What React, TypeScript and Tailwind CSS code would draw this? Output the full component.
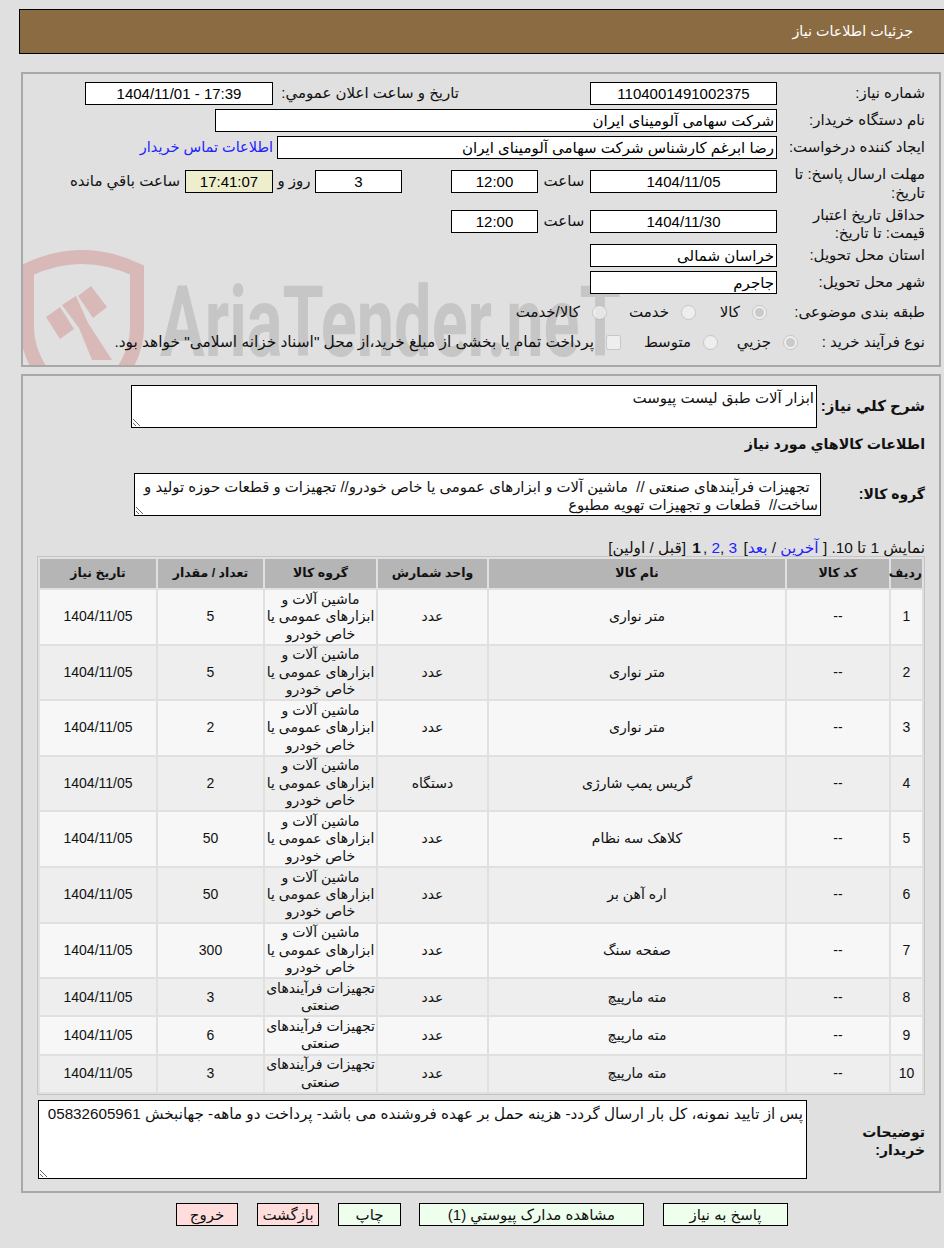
import type { ReactNode } from 'react';

const inputClass = 'h-[23px] border border-black px-[2px] text-[15px] leading-[21px] text-black outline-none';

function Field({ value, width, center = true, bg = 'bg-white' }: { value: string; width: string; center?: boolean; bg?: string }) {
  return (
    <div className={`${inputClass} ${width} ${bg} shrink-0 overflow-hidden whitespace-nowrap ${center ? 'text-center' : 'text-right'}`}>
      {value}
    </div>
  );
}

function Row({ label, className = '', children }: { label: ReactNode; className?: string; children: ReactNode }) {
  return (
    <div className={`flex items-center ${className}`}>
      <div className="w-[148px] shrink-0 pl-[2px] text-right">{label}</div>
      {children}
    </div>
  );
}

function Choice({ label, width, checked = false, box = false }: { label: ReactNode; width: string; checked?: boolean; box?: boolean }) {
  return (
    <label className={`flex items-center gap-[12px] ${width} shrink-0`}>
      <input
        type={box ? 'checkbox' : 'radio'}
        disabled
        defaultChecked={checked}
        className="m-0 h-[15px] w-[15px] shrink-0"
      />
      <span className="whitespace-nowrap">{label}</span>
    </label>
  );
}

const toolGroup = 'ماشین آلات و ابزارهای عمومی یا خاص خودرو';
const equipGroup = 'تجهیزات فرآیندهای صنعتی';

const items = [
  { id: 1, name: 'متر نواری', unit: 'عدد', group: toolGroup, qty: 5 },
  { id: 2, name: 'متر نواری', unit: 'عدد', group: toolGroup, qty: 5 },
  { id: 3, name: 'متر نواری', unit: 'عدد', group: toolGroup, qty: 2 },
  { id: 4, name: 'گریس پمپ شارژی', unit: 'دستگاه', group: toolGroup, qty: 2 },
  { id: 5, name: 'کلاهک سه نظام', unit: 'عدد', group: toolGroup, qty: 50 },
  { id: 6, name: 'اره آهن بر', unit: 'عدد', group: toolGroup, qty: 50 },
  { id: 7, name: 'صفحه سنگ', unit: 'عدد', group: toolGroup, qty: 300 },
  { id: 8, name: 'مته مارپیچ', unit: 'عدد', group: equipGroup, qty: 3 },
  { id: 9, name: 'مته مارپیچ', unit: 'عدد', group: equipGroup, qty: 6 },
  { id: 10, name: 'مته مارپیچ', unit: 'عدد', group: equipGroup, qty: 3 },
];

const headers = ['ردیف', 'کد کالا', 'نام کالا', 'واحد شمارش', 'گروه کالا', 'تعداد / مقدار', 'تاریخ نیاز'];

function Watermark() {
  return (
    <div dir="ltr" className="pointer-events-none absolute left-[-3px] top-[176px] flex h-[130px] w-[640px] items-start">
      <svg width="126" height="130" viewBox="0 0 126 130" className="shrink-0">
        <path d="M7 20 Q62 -6 117 20 V78 Q117 120 62 165 Q7 120 7 78 Z" fill="none" stroke="#d9b8b8" strokeWidth="14" />
        <path d="M26 67 L40 57 L54 79 L40 89 Z" fill="#d9b8b8" />
        <path d="M42 55 L56 46 L68 73 L92 110 L72 110 L59 78 Z" fill="#d9b8b8" />
        <path d="M58 46 L71 36 L87 57 L73 68 Z" fill="#d9b8b8" />
      </svg>
      <span className="ml-[14px] mt-[18px] origin-left scale-x-[0.68] whitespace-nowrap font-['Roboto',sans-serif] text-[98px] font-bold leading-[110px] text-[#c6c6c6]">
        AriaTender.neT
      </span>
    </div>
  );
}

export default function App() {
  return (
    <div
      dir="rtl"
      className="h-[1248px] overflow-hidden bg-[#e0e0e0] pt-[9px] font-['Liberation_Sans','DejaVu_Sans',sans-serif] text-[15px] text-[#111]"
    >
      {/* Page title */}
      <div className="ml-[19px] flex h-[45px] items-center border-y border-l border-black bg-[#8b6c42] pr-[31px] text-[14.3px] text-white">
        جزئیات اطلاعات نیاز
      </div>

      {/* Request details */}
      <div className="relative ml-[21px] mr-[3px] mt-[18px] h-[295px] overflow-hidden border-2 border-[#a8a8a8] pr-[14px] pt-[8px]">
        <Watermark />
        <div className="relative flex flex-col">
          <Row label="شماره نیاز:">
            <Field value="1104001491002375" width="w-[187px]" />
            <div className="mr-[131px] w-[186px] shrink-0 whitespace-nowrap">تاریخ و ساعت اعلان عمومي:</div>
            <Field value="17:39 - 1404/11/01" width="w-[188px]" />
          </Row>
          <Row label="نام دستگاه خریدار:" className="mt-[4px]">
            <Field value="شرکت سهامی آلومینای ایران" width="w-[562px]" center={false} />
          </Row>
          <Row label="ایجاد کننده درخواست:" className="mt-[4px]">
            <Field value="رضا ابرغم کارشناس شرکت سهامی آلومینای ایران" width="w-[500px]" center={false} />
            <a className="mr-[4px] whitespace-nowrap text-[14.5px] text-[#2222ff]">اطلاعات تماس خریدار</a>
          </Row>
          <div className="mt-[5px] flex items-start">
            <div className="w-[148px] shrink-0 pl-[2px] leading-[19px]">مهلت ارسال پاسخ: تا تاریخ:</div>
            <div className="mt-[6px] flex items-center">
              <Field value="1404/11/05" width="w-[187px]" />
              <div className="w-[52px] shrink-0 text-center">ساعت</div>
              <Field value="12:00" width="w-[87px]" />
              <div className="w-[49px] shrink-0" />
              <Field value="3" width="w-[87px]" />
              <div className="w-[42px] shrink-0 text-center">روز و</div>
              <Field value="17:41:07" width="w-[88px]" bg="bg-[#eeeecc]" />
              <div className="mr-[5px] whitespace-nowrap">ساعت باقي مانده</div>
            </div>
          </div>
          <div className="mt-[4px] flex items-start">
            <div className="w-[148px] shrink-0 pl-[2px] leading-[18px]">حداقل تاریخ اعتبار قیمت: تا تاریخ:</div>
            <div className="mt-[4px] flex items-center">
              <Field value="1404/11/30" width="w-[187px]" />
              <div className="w-[52px] shrink-0 text-center">ساعت</div>
              <Field value="12:00" width="w-[87px]" />
            </div>
          </div>
          <Row label="استان محل تحویل:" className="mt-[2px]">
            <Field value="خراسان شمالی" width="w-[187px]" center={false} />
          </Row>
          <Row label="شهر محل تحویل:" className="mt-[4px]">
            <Field value="جاجرم" width="w-[187px]" center={false} />
          </Row>
          <Row label="طبقه بندی موضوعی:" className="mt-[7px] h-[22px]">
            <div className="w-[10px] shrink-0" />
            <Choice label="کالا" width="w-[71px]" checked />
            <Choice label="خدمت" width="w-[89px]" />
            <Choice label="کالا/خدمت" width="w-[100px]" />
          </Row>
          <Row label="نوع فرآیند خرید :" className="mt-[8px] h-[22px]">
            <div className="-mr-[21px] flex items-center">
              <Choice label="جزیي" width="w-[80px]" checked />
              <Choice label="متوسط" width="w-[97px]" />
              <Choice
                label={<span className="text-[15.4px]">{'پرداخت تمام یا بخشی از مبلغ خرید،از محل "اسناد خزانه اسلامی" خواهد بود.'}</span>}
                width="w-[500px]"
                box
              />
            </div>
          </Row>
        </div>
      </div>

      {/* Need description and item table */}
      <div className="ml-[21px] mr-[3px] mt-[7px] h-[819px] border-2 border-[#a8a8a8] pr-[14px] pt-[9px]">
        <div className="flex items-center">
          <div className="w-[108px] shrink-0 font-bold">شرح کلي نیاز:</div>
          <textarea
            readOnly
            defaultValue="ابزار آلات طبق لیست پیوست"
            className="block h-[43px] w-[686px] border border-black bg-white px-[2px] pt-[3px] text-[15px] leading-[18px] outline-none"
          />
        </div>
        <div className="mt-[6px] text-[14.2px] font-bold leading-[20px]">اطلاعات کالاهاي مورد نياز</div>
        <div className="mt-[19px] flex items-center">
          <div className="w-[104px] shrink-0 text-[14px] font-bold">گروه کالا:</div>
          <textarea
            readOnly
            defaultValue="  تجهیزات فرآیندهای صنعتی //  ماشین آلات و ابزارهای عمومی یا خاص خودرو// تجهیزات و قطعات حوزه تولید و ساخت//  قطعات و تجهیزات تهویه مطبوع"
            className="block h-[43px] w-[687px] border border-black bg-white px-[2px] pt-[4px] text-[14.9px] leading-[18px] outline-none"
          />
        </div>

        <div className="mt-[23px] text-[15.4px] leading-[17px]">
          نمایش 1 تا 10. [ <a className="text-[#2222ff]">آخرین</a> / <a className="text-[#2222ff]">بعد</a>]{' '}
          <a className="mr-[2px] text-[#2222ff]">3</a> ,<a className="text-[#2222ff]">2</a> ,<b className="mr-[2px]">1</b>{' '}
          <span className="mr-[2px]">[قبل / اولین]</span>
        </div>

        <table className="w-[886px] table-fixed border-separate border-spacing-[2px] border border-[#c4c4c4] text-center text-[14px] leading-[17.4px]">
          <colgroup>
            <col className="w-[31px]" />
            <col className="w-[102px]" />
            <col className="w-[296px]" />
            <col className="w-[109px]" />
            <col className="w-[111px]" />
            <col className="w-[105px]" />
            <col className="w-[116px]" />
          </colgroup>
          <thead>
            <tr>
              {headers.map((h) => (
                <th key={h} className="h-[29px] bg-[#b5b5b5] p-0 text-[12.5px] font-bold">
                  {h}
                </th>
              ))}
            </tr>
          </thead>
          <tbody>
            {items.map((item, i) => (
              <tr key={item.id} className={i % 2 === 0 ? 'bg-[#f7f7f7]' : 'bg-[#eeeeee]'}>
                <td className="p-0">{item.id}</td>
                <td className="p-0">--</td>
                <td className="p-0">{item.name}</td>
                <td className="p-0">{item.unit}</td>
                <td className="px-0 py-[0.7px]">{item.group}</td>
                <td className="p-0">{item.qty}</td>
                <td className="p-0">1404/11/05</td>
              </tr>
            ))}
          </tbody>
        </table>

        <div className="mt-[5px] flex items-center">
          <div className="w-[118px] shrink-0">
            <div className="w-[70px] pt-[3px] text-[14px] font-bold leading-[18px]">توضیحات خریدار:</div>
          </div>
          <textarea
            readOnly
            defaultValue="پس از تایید نمونه، کل بار ارسال گردد- هزینه حمل بر عهده فروشنده می باشد- پرداخت دو ماهه- جهانبخش 05832605961"
            className="block h-[79px] w-[769px] border border-black bg-white px-[3px] py-[4px] text-[15.2px] leading-[18px] outline-none"
          />
        </div>
      </div>

      {/* Actions */}
      <div className="mr-[156px] mt-[10px] flex gap-[19px]">
        <button className="h-[23px] w-[125px] border border-black bg-[#eeffee]">پاسخ به نیاز</button>
        <button className="h-[23px] w-[225px] border border-black bg-[#eeffee]">مشاهده مدارک پیوستي (1)</button>
        <button className="-mr-px h-[23px] w-[63px] border border-black bg-[#eeffee]">چاپ</button>
        <button className="h-[23px] w-[62px] border border-black bg-[#ffdddd]">بازگشت</button>
        <button className="h-[23px] w-[62px] border border-black bg-[#ffdddd]">خروج</button>
      </div>
    </div>
  );
}
